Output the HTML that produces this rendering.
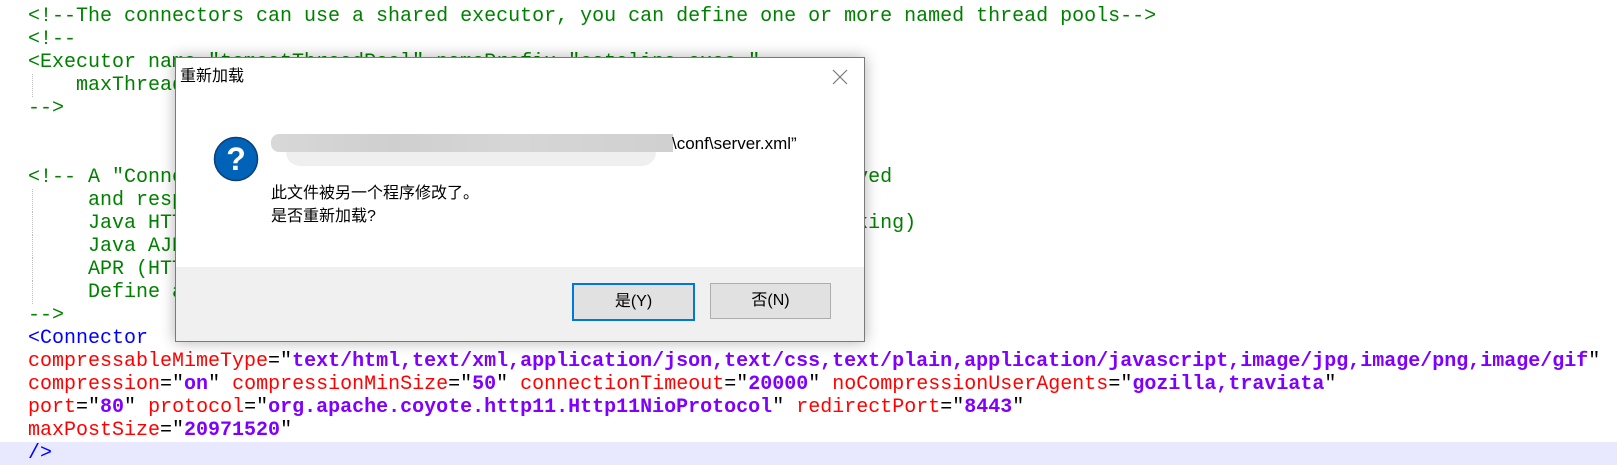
<!DOCTYPE html>
<html><head><meta charset="utf-8"><style>
body{margin:0;width:1617px;height:463px;overflow:hidden;background:#fff;position:relative}
.code{position:absolute;left:0;top:5px;width:1617px;font-family:"Liberation Mono",monospace;font-size:20px;line-height:23px}
.ln{height:23px;padding-left:28px;position:relative;white-space:pre}
.hl{background:#e8e8ff}
.c{color:#008000}.t{color:#0000ff}.a{color:#ff0000}.v{color:#8000ff;font-weight:bold}.k{color:#000}
.g{position:absolute;left:32px;top:0;height:23px;border-left:1px dotted #bbb}
.dlg{position:absolute;left:175px;top:57px;width:688px;height:283px;border:1px solid #7a7a7a;background:#fff;box-shadow:0 0 14px rgba(0,0,0,.3);font-family:"Liberation Sans","Noto Sans CJK SC",sans-serif;color:#000}
.foot{position:absolute;left:0;right:0;top:209px;bottom:0;background:#f0f0f0}
.btn{position:absolute;top:16px;width:119px;height:34px;background:#e1e1e1;border:1px solid #adadad;font-size:16px;line-height:34px;text-align:center}
</style></head><body>
<div class="code"><div class="ln c">&lt;!--The connectors can use a shared executor, you can define one or more named thread pools--&gt;</div><div class="ln c">&lt;!--</div><div class="ln c">&lt;Executor name="tomcatThreadPool" namePrefix="catalina-exec-"</div><div class="ln c"><span class="g"></span>    maxThreads="150" minSpareThreads="4"/&gt;</div><div class="ln c">--&gt;</div><div class="ln"></div><div class="ln"></div><div class="ln c">&lt;!-- A "Connector" represents an endpoint by which requests are received</div><div class="ln c"><span class="g"></span>     and responses are returned. Documentation at :</div><div class="ln c"><span class="g"></span>     Java HTTP Connector: /docs/config/http.html (blocking &amp; non-blocking)</div><div class="ln c"><span class="g"></span>     Java AJP  Connector: /docs/config/ajp.html</div><div class="ln c"><span class="g"></span>     APR (HTTP/AJP) Connector: /docs/apr.html</div><div class="ln c"><span class="g"></span>     Define a non-SSL/TLS HTTP/1.1 Connector on port 8080</div><div class="ln c">--&gt;</div><div class="ln t">&lt;Connector</div><div class="ln"><span class="a">compressableMimeType</span><span class="k">="</span><span class="v">text/html,text/xml,application/json,text/css,text/plain,application/javascript,image/jpg,image/png,image/gif</span><span class="k">"</span></div><div class="ln"><span class="a">compression</span><span class="k">="</span><span class="v">on</span><span class="k">" </span><span class="a">compressionMinSize</span><span class="k">="</span><span class="v">50</span><span class="k">" </span><span class="a">connectionTimeout</span><span class="k">="</span><span class="v">20000</span><span class="k">" </span><span class="a">noCompressionUserAgents</span><span class="k">="</span><span class="v">gozilla,traviata</span><span class="k">"</span></div><div class="ln"><span class="a">port</span><span class="k">="</span><span class="v">80</span><span class="k">" </span><span class="a">protocol</span><span class="k">="</span><span class="v">org.apache.coyote.http11.Http11NioProtocol</span><span class="k">" </span><span class="a">redirectPort</span><span class="k">="</span><span class="v">8443</span><span class="k">"</span></div><div class="ln"><span class="a">maxPostSize</span><span class="k">="</span><span class="v">20971520</span><span class="k">"</span></div><div class="ln t hl">/&gt;</div></div>

<div class="dlg">
<div style="position:absolute;left:4px;top:8px;font-size:16px;line-height:22px">重新加载</div>
<svg style="position:absolute;left:656px;top:11px" width="16" height="16" viewBox="0 0 16 16"><path d="M1 1L15 15M15 1L1 15" stroke="#777" stroke-width="1.2"/></svg>
<svg style="position:absolute;left:37px;top:78px" width="46" height="46" viewBox="0 0 46 46"><circle cx="23" cy="23" r="21.5" fill="#0063b8" stroke="#0a3f7a" stroke-width="1.5"/><text x="23" y="34" text-anchor="middle" font-family="Liberation Sans,sans-serif" font-weight="bold" font-size="32" fill="#fff">?</text></svg>
<div style="position:absolute;left:95px;top:76px;width:402px;height:18px;border-radius:8px 0 0 8px;background:linear-gradient(90deg,#d8d8d8,#cfcfcf 30%,#d6d6d6 60%,#d0d0d0)"></div>
<div style="position:absolute;left:110px;top:94px;width:370px;height:14px;border-radius:0 0 20px 20px;background:#efefef"></div>
<div style="position:absolute;left:496px;top:74px;font-size:17px;line-height:24px">\conf\server.xml”</div>
<div style="position:absolute;left:95px;top:124px;font-size:16px;line-height:23px">此文件被另一个程序修改了。<br>是否重新加载?</div>
<div class="foot">
<div class="btn" style="left:396px;border:2px solid #0078d7;width:119px;height:34px;line-height:34px">是(Y)</div>
<div class="btn" style="left:534px">否(N)</div>
</div>
</div>
</body></html>
